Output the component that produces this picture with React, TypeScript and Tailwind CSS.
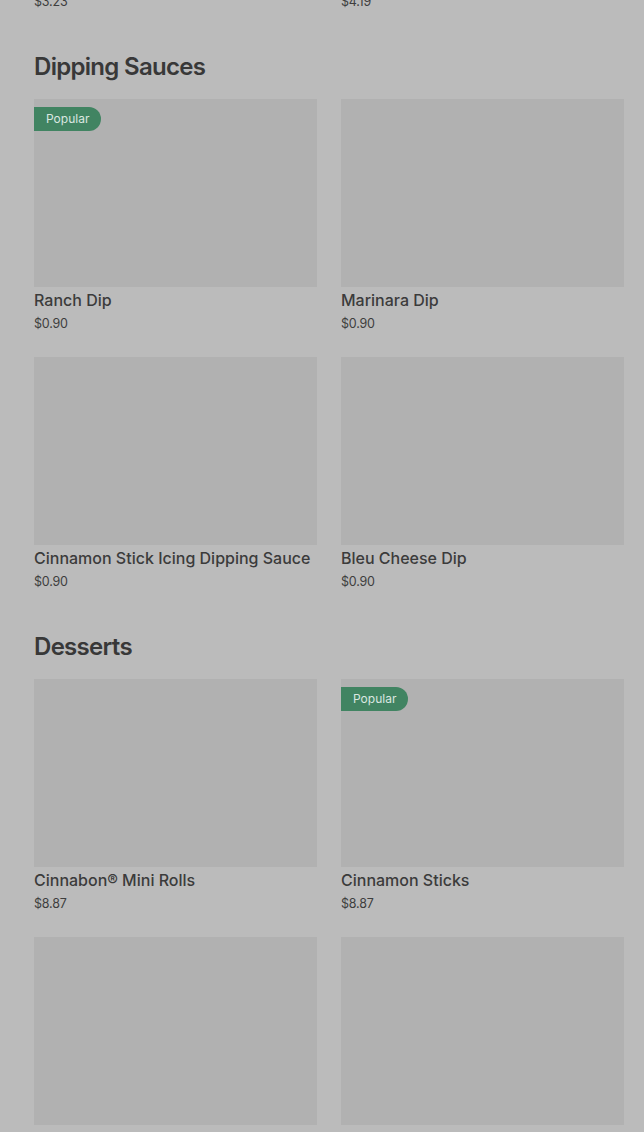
import React from "react";

type Item = { name: string; price: string; popular?: boolean };

const sections: { title: string; items: Item[]; mt: string }[] = [
  {
    title: "Dipping Sauces",
    mt: "mt-[39px]",
    items: [
      { name: "Ranch Dip", price: "$0.90", popular: true },
      { name: "Marinara Dip", price: "$0.90" },
      { name: "Cinnamon Stick Icing Dipping Sauce", price: "$0.90" },
      { name: "Bleu Cheese Dip", price: "$0.90" },
    ],
  },
  {
    title: "Desserts",
    mt: "mt-[39px]",
    items: [
      { name: "Cinnabon® Mini Rolls", price: "$8.87" },
      { name: "Cinnamon Sticks", price: "$8.87", popular: true },
      { name: "Chocolate Dunkers", price: "$6.99" },
      { name: "Cinnamon Bites", price: "$5.49" },
    ],
  },
];

function Card({ item }: { item: Item }) {
  return (
    <div className="flex flex-col">
      <div className="relative h-[188px] bg-[#b1b1b1]">
        {item.popular && (
          <div className="absolute left-0 top-[8px] h-[24px] pl-[12px] pr-[12px] rounded-r-full bg-[#418462] text-[#dbe7e0] text-[12px] leading-[24px]">
            Popular
          </div>
        )}
      </div>
      <div className="mt-[1px] text-[16px] leading-[24px] font-medium text-[#3b3b3b] whitespace-nowrap">
        {item.name}
      </div>
      <div className="mt-[2px] text-[12.5px] leading-[20px] tracking-[-0.2px] text-[#3e3e3e]">{item.price}</div>
    </div>
  );
}

export default function App() {
  return (
    <div
      className="w-[644px] h-[1132px] overflow-hidden bg-[#bbbbbb] pl-[34px] pr-[20px]"
      style={{ fontFamily: "Inter, 'Noto Sans', sans-serif" }}
    >
      <div className="-mt-[8px] grid grid-cols-2 gap-x-[24px] text-[12.5px] leading-[20px] tracking-[-0.2px] text-[#3e3e3e]">
        <div>$3.23</div>
        <div>$4.19</div>
      </div>
      {sections.map((s) => (
        <div key={s.title} className={s.mt}>
          <h2 className="text-[24px] leading-[32px] font-semibold tracking-[-0.7px] text-[#383838]">
            {s.title}
          </h2>
          <div className="mt-[16px] grid grid-cols-2 gap-x-[24px] gap-y-[23px]">
            {s.items.map((it) => (
              <Card key={it.name} item={it} />
            ))}
          </div>
        </div>
      ))}
    </div>
  );
}
